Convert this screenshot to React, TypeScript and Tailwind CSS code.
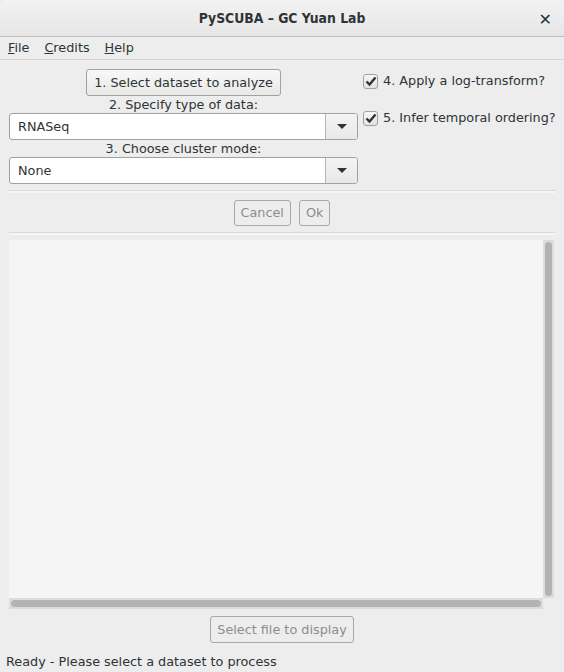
import React from "react";

const font = { fontFamily: '"DejaVu Sans", "Liberation Sans", sans-serif' };
const titleFont = { fontFamily: '"DejaVu Sans Condensed", "DejaVu Sans", sans-serif', fontStretch: "condensed" as const };

function Caret() {
  return (
    <svg width="10" height="6" viewBox="0 0 10 6">
      <path d="M0 0 H10 L5 5 Z" fill="#2e3436" />
    </svg>
  );
}

function Combo({ value }: { value: string }) {
  return (
    <div className="flex h-[27px] w-[349px] rounded-[3px] border border-[#a1a1a1] bg-white overflow-hidden">
      <div className="flex-1 flex items-center pl-[8px] text-[12.8px] text-[#2e3436]">{value}</div>
      <div className="w-[32px] flex items-center justify-center border-l border-[#b6b6b3] bg-gradient-to-b from-[#f4f4f4] to-[#e8e8e7]">
        <Caret />
      </div>
    </div>
  );
}

function Check({ label }: { label: string }) {
  return (
    <div className="flex items-center gap-[5px] h-[20px]">
      <div className="w-[15px] h-[15px] rounded-[3px] border border-[#a1a1a1] bg-gradient-to-b from-[#f6f6f6] to-[#e2e2e2] flex items-center justify-center">
        <svg width="12" height="11" viewBox="0 0 12 11">
          <path d="M1.5 5.5 L4.5 8.5 L10.5 1.5" stroke="#2e3436" strokeWidth="2.4" fill="none" />
        </svg>
      </div>
      <span className="text-[12.8px] text-[#2e3436]">{label}</span>
    </div>
  );
}

export default function App() {
  return (
    <div style={font} className="w-[564px] h-[672px] bg-[#ededed] flex flex-col overflow-hidden relative">
      {/* Title bar */}
      <div className="h-[37px] shrink-0 rounded-t-[6px] bg-gradient-to-b from-[#f2f2f2] to-[#e6e6e6] border-b border-[#bfbfbf] flex items-center justify-center relative">
        <span style={titleFont} className="text-[13.8px] font-bold text-[#2e3436]">PySCUBA – GC Yuan Lab</span>
        <span className="absolute right-[12px] top-[8px] text-[16px] font-bold text-[#2e3436]">✕</span>
      </div>
      {/* Menu bar */}
      <div className="h-[23px] shrink-0 flex items-center gap-[15px] pl-[8px] border-b border-[#d4d4d4] text-[12.8px] text-[#2e3436]">
        <span><u>F</u>ile</span>
        <span><u>C</u>redits</span>
        <span><u>H</u>elp</span>
      </div>
      {/* Top controls */}
      <div className="flex pt-[9px] pl-[9px] h-[130px] shrink-0">
        <div className="w-[349px] flex flex-col items-center">
          <div className="h-[27px] px-[7px] flex items-center rounded-[3px] border border-[#a1a1a1] bg-gradient-to-b from-[#f8f8f8] to-[#e8e8e7] text-[12.8px] text-[#2e3436]">
            1. Select dataset to analyze
          </div>
          <div className="h-[17px] flex items-center text-[12.8px] text-[#2e3436]">2. Specify type of data:</div>
          <Combo value="RNASeq" />
          <div className="h-[17px] flex items-center text-[12.8px] text-[#2e3436]">3. Choose cluster mode:</div>
          <Combo value="None" />
        </div>
        <div className="flex flex-col pl-[5px] pt-[2px] gap-[17px]">
          <Check label="4. Apply a log-transform?" />
          <Check label="5. Infer temporal ordering?" />
        </div>
      </div>
      <div className="h-[3px] shrink-0 ml-[9px] mr-[9px] border-t border-[#d8d8d8] bg-[#f6f6f6]" />
      <div className="flex justify-center gap-[8px] pt-[7px] pb-[6px] shrink-0">
        <div className="h-[26px] px-[6px] flex items-center rounded-[3px] border border-[#a8a8a8] text-[12.8px] text-[#8b8e8f]">Cancel</div>
        <div className="h-[26px] px-[6px] flex items-center rounded-[3px] border border-[#a8a8a8] text-[12.8px] text-[#8b8e8f]">Ok</div>
      </div>
      <div className="h-[3px] shrink-0 ml-[9px] mr-[9px] border-t border-[#d8d8d8] bg-[#f6f6f6]" />
      {/* Text area with scrollbars */}
      <div className="mt-[5px] ml-[9px] mr-[10px] h-[369px] shrink-0 grid grid-cols-[1fr_11px] grid-rows-[1fr_11px]">
        <div className="bg-[#f5f5f5]" />
        <div className="bg-[#dcdcdc] flex justify-center pt-[2px] pb-[2px]">
          <div className="w-[7px] h-full rounded-full bg-[#b3b3b3]" />
        </div>
        <div className="bg-[#dcdcdc] flex items-center pl-[2px] pr-[2px]">
          <div className="h-[7px] w-full rounded-full bg-[#b3b3b3]" />
        </div>
        <div className="bg-[#ededed]" />
      </div>
      <div className="flex justify-center pt-[7px] shrink-0">
        <div className="h-[27px] px-[6px] flex items-center rounded-[3px] border border-[#a8a8a8] text-[12.8px] text-[#8b8e8f]">Select file to display</div>
      </div>
      <div className="pl-[6px] pt-[9px] text-[12.8px] text-[#2e3436]">Ready - Please select a dataset to process</div>
    </div>
  );
}
